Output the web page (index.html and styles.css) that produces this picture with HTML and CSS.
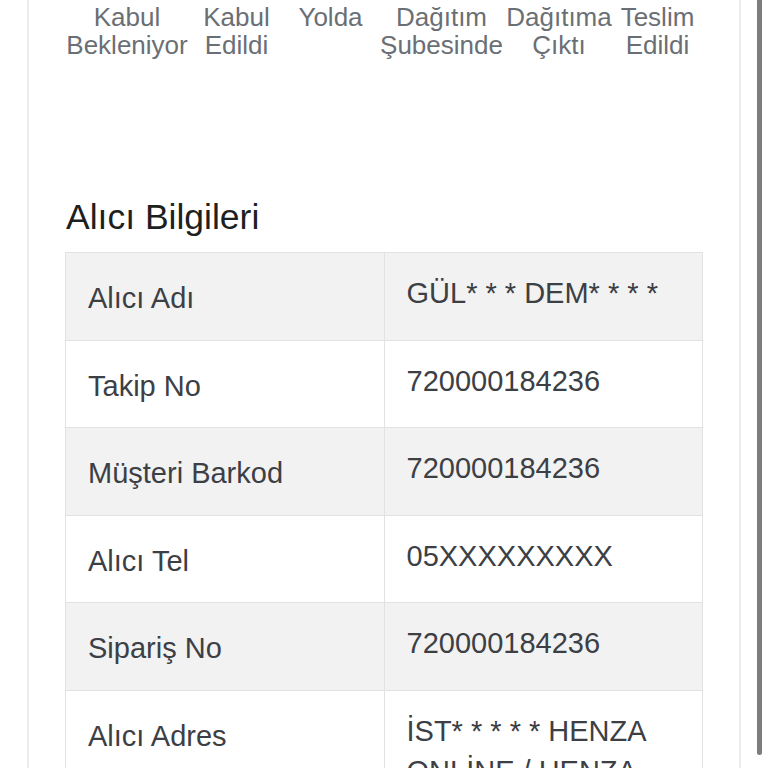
FILE: index.html
```html
<!DOCTYPE html>
<html lang="tr">
<head>
<meta charset="utf-8">
<title>Gönderi Takip</title>
<link rel="stylesheet" href="styles.css">
</head>
<body>
<div class="card">
  <div class="steps">
    <div class="step">Kabul<br>Bekleniyor</div>
    <div class="step">Kabul<br>Edildi</div>
    <div class="step">Yolda</div>
    <div class="step">Dağıtım<br>Şubesinde</div>
    <div class="step">Dağıtıma<br>Çıktı</div>
    <div class="step">Teslim<br>Edildi</div>
  </div>
  <h2 class="title">Alıcı Bilgileri</h2>
  <table class="info">
    <tr><th>Alıcı Adı</th><td>GÜL* * * DEM* * * *</td></tr>
    <tr><th>Takip No</th><td>720000184236</td></tr>
    <tr><th>Müşteri Barkod</th><td>720000184236</td></tr>
    <tr><th>Alıcı Tel</th><td>05XXXXXXXXX</td></tr>
    <tr><th>Sipariş No</th><td>720000184236</td></tr>
    <tr><th>Alıcı Adres</th><td>İST* * * * * HENZA ONLİNE / HENZA KOZMETİK</td></tr>
  </table>
</div>
<div class="scroll-indicator"></div>
</body>
</html>
```
FILE: styles.css
```css
html, body {
  margin: 0;
  padding: 0;
  background: #ffffff;
  font-family: "Liberation Sans", Arial, sans-serif;
  overflow: hidden;
}

.card {
  margin: -40px 0 0 27px;
  width: 714px;
  border: 2px solid #ececec;
  padding: 41px 36px 40px 36px;
  box-sizing: border-box;
  background: #ffffff;
}

.steps {
  display: grid;
  grid-template-columns: 124px 95px 93px 129px 106px 91px;
  font-size: 26px;
  line-height: 28px;
  color: #6a6f75;
  text-align: center;
  white-space: nowrap;
}

.title {
  margin: 137px 0 12.8px 1px;
  font-size: 35.5px;
  line-height: 43.2px;
  font-weight: normal;
  color: #1d1f21;
}

.info {
  width: 638px;
  border-collapse: collapse;
  table-layout: fixed;
  font-size: 29px;
  line-height: 40px;
  color: #3c4045;
}

.info th,
.info td {
  width: 50%;
  border: 1px solid #e2e2e2;
  vertical-align: top;
  text-align: left;
  font-weight: normal;
}

.info th {
  padding: 25px 22px 21.5px 22px;
}

.info td {
  padding: 20px 22px 26.5px 22px;
}

.info tr:nth-child(odd) {
  background: #f2f2f2;
}

.scroll-indicator {
  position: fixed;
  top: -10px;
  right: 6px;
  width: 5px;
  height: 765px;
  border-radius: 3px;
  background: #7d7d7d;
}
```
